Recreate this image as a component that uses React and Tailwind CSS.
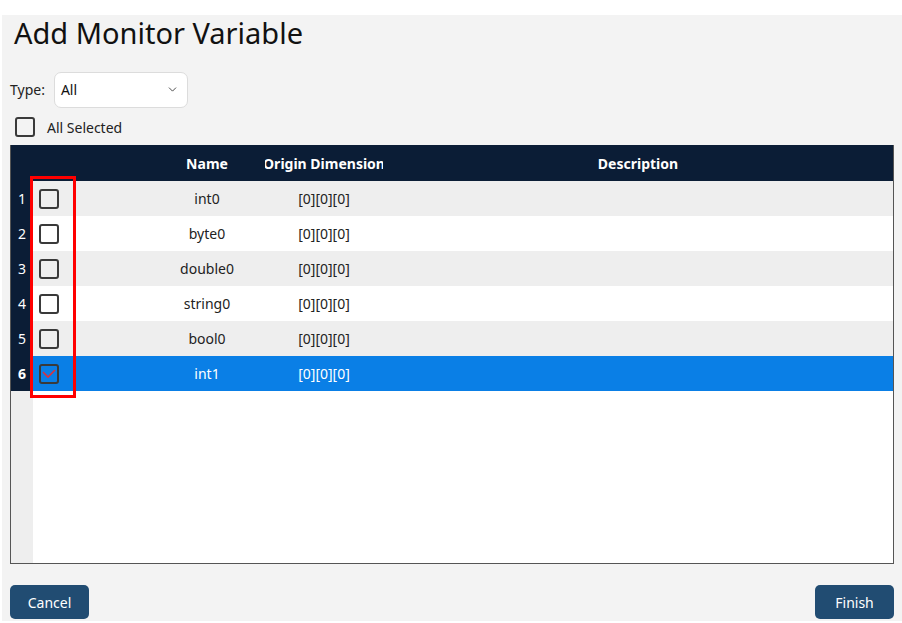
import React from "react";
import { ChevronDown } from "lucide-react";

const rows = [
  { id: 1, name: "int0", dim: "[0][0][0]" },
  { id: 2, name: "byte0", dim: "[0][0][0]" },
  { id: 3, name: "double0", dim: "[0][0][0]" },
  { id: 4, name: "string0", dim: "[0][0][0]" },
  { id: 5, name: "bool0", dim: "[0][0][0]" },
  { id: 6, name: "int1", dim: "[0][0][0]", selected: true },
];

function Box({ checked }) {
  return (
    <div className="w-[20px] h-[20px] rounded-[3px] border-2 border-[#3a3a3a] flex items-center justify-center">
      {checked && (
        <svg width="14" height="10" viewBox="0 0 14 10">
          <path d="M1 3 L6 8 L13 1" fill="none" stroke="#e0303a" strokeWidth="1.6" />
        </svg>
      )}
    </div>
  );
}

export default function App() {
  return (
    <div
      className="w-[902px] h-[623px] bg-white pt-[15px] pl-[2px] overflow-hidden"
      style={{ fontFamily: '"Noto Sans", "Open Sans", sans-serif' }}
    >
      <div className="w-[900px] h-[606px] bg-[#f3f3f3] flex flex-col">
        <div className="pl-[12px] h-[40px] text-[29px] leading-[36px] text-[#111]">
          Add Monitor Variable
        </div>

        <div className="mt-[17px] pl-[8px] flex items-center gap-[9px] h-[35px]">
          <span className="text-[14px] text-[#222]">Type:</span>
          <div className="w-[134px] h-[36px] bg-white border border-[#dcdcdc] rounded-[7px] flex items-center justify-between pl-[6px] pr-[8px]">
            <span className="text-[14px] text-[#111]">All</span>
            <ChevronDown size={13} strokeWidth={1.6} className="text-[#333]" />
          </div>
        </div>

        <div className="mt-[10px] pl-[13px] flex items-center gap-[12px] h-[20px]">
          <Box />
          <span className="text-[14px] text-[#222]">All Selected</span>
        </div>

        <div className="relative mt-[8px] ml-[8px] w-[884px] h-[419px] border-x border-b border-[#555] flex flex-col bg-white">
          <div className="h-[36px] bg-[#0b1d36] flex items-center text-white font-bold text-[14px]">
            <div className="w-[22px]" />
            <div className="w-[116px]" />
            <div className="w-[116px] text-center">Name</div>
            <div className="w-[118px] overflow-hidden flex justify-center whitespace-nowrap">Origin Dimension</div>
            <div className="flex-1 text-center">Description</div>
          </div>
          {rows.map((r) => (
            <div
              key={r.id}
              className={
                "h-[35px] flex items-center text-[14px] " +
                (r.selected
                  ? "bg-[#0a7fe6] text-white"
                  : r.id % 2 === 1
                  ? "bg-[#eeeeee] text-[#222]"
                  : "bg-white text-[#222]")
              }
            >
              <div
                className={
                  "w-[22px] h-full bg-[#0b1d36] text-white flex items-center justify-center " +
                  (r.selected ? "font-bold" : "")
                }
              >
                {r.id}
              </div>
              <div className="w-[116px] pl-[6px]">
                <Box checked={r.selected} />
              </div>
              <div className="w-[116px] text-center">{r.name}</div>
              <div className="w-[118px] text-center">{r.dim}</div>
              <div className="flex-1" />
            </div>
          ))}
          <div className="flex-1 flex">
            <div className="w-[22px] bg-[#eeeeee]" />
            <div className="flex-1" />
          </div>

          <div className="absolute left-[19px] top-[31px] w-[46px] h-[222px] border-[3px] border-[#ff0000]" />
        </div>

        <div className="mt-[21px] px-[8px] flex justify-between">
          <button className="w-[79px] h-[34px] rounded-[5px] bg-[#214c72] text-white text-[14px]">
            Cancel
          </button>
          <button className="w-[79px] h-[34px] rounded-[5px] bg-[#214c72] text-white text-[14px]">
            Finish
          </button>
        </div>
      </div>
    </div>
  );
}
